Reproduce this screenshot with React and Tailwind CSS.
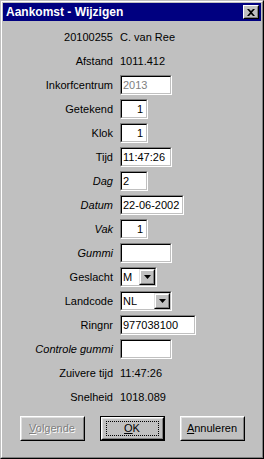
const FONT = { fontFamily: '"Liberation Sans", Arial, sans-serif' };

function Field({ value = "", width, align = "left", disabled }) {
  return (
    <div
      className="h-[20px] border border-t-[#808080] border-l-[#808080] border-b-white border-r-white"
      style={{ width }}
    >
      <div
        className={`flex h-full items-center overflow-hidden whitespace-nowrap border border-t-black border-l-black border-b-[#c0c0c0] border-r-[#c0c0c0] bg-white px-[1px] ${
          align === "right" ? "justify-end pr-[3px]" : "justify-start"
        } ${disabled ? "text-[#808080]" : "text-black"}`}
      >
        {value}
      </div>
    </div>
  );
}

function Combo({ value, width }) {
  return (
    <div
      className="h-[20px] border border-t-[#808080] border-l-[#808080] border-b-white border-r-white"
      style={{ width }}
    >
      <div className="flex h-full border border-t-black border-l-black border-b-[#c0c0c0] border-r-[#c0c0c0] bg-white">
        <div className="flex flex-1 items-center px-[1px]">{value}</div>
        <div className="w-[16px] border border-t-[#dfdfdf] border-l-[#dfdfdf] border-b-black border-r-black bg-[#c0c0c0]">
          <div className="flex h-full items-center justify-center border border-t-white border-l-white border-b-[#808080] border-r-[#808080]">
            <svg width="7" height="4" viewBox="0 0 7 4">
              <path d="M0 0h7L3.5 4z" fill="#000" />
            </svg>
          </div>
        </div>
      </div>
    </div>
  );
}

function Row({ label, italic, children }) {
  return (
    <div className="flex h-[24px] items-center whitespace-nowrap">
      <div
        className={`w-[111px] pr-[1px] text-right ${italic ? "italic" : ""}`}
      >
        {label}
      </div>
      <div className="ml-[6px] flex items-center">{children}</div>
    </div>
  );
}

function Button({ children, isDefault, disabled }) {
  return (
    <div
      className={`h-[25px] w-[65px] ${isDefault ? "border border-black" : ""}`}
    >
      <div className="h-full border border-t-white border-l-white border-b-black border-r-black">
        <div className="flex h-full items-center justify-center border border-t-[#dfdfdf] border-l-[#dfdfdf] border-b-[#808080] border-r-[#808080]">
          {isDefault ? (
            <div className="flex h-[15px] w-[53px] items-center justify-center border border-dotted border-black">
              {children}
            </div>
          ) : (
            <span
              className={disabled ? "text-[#808080]" : "text-black"}
              style={disabled ? { textShadow: "1px 1px 0 #fff" } : undefined}
            >
              {children}
            </span>
          )}
        </div>
      </div>
    </div>
  );
}

export default function App() {
  return (
    <div
      className="h-[459px] w-[264px] border border-t-[#c0c0c0] border-l-[#c0c0c0] border-b-black border-r-black bg-[#c0c0c0] text-[11px] text-black"
      style={FONT}
    >
      <div className="flex h-full flex-col border border-t-white border-l-white border-b-[#808080] border-r-[#808080] p-[1px]">
        <div className="flex h-[18px] items-center justify-between bg-[#000080] pl-[3px] pr-[2px]">
          <span className="text-[12px] font-bold text-white">
            Aankomst - Wijzigen
          </span>
          <div className="h-[14px] w-[16px] border border-t-white border-l-white border-b-black border-r-black bg-[#c0c0c0]">
            <div className="flex h-full items-center justify-center border border-t-[#c0c0c0] border-l-[#c0c0c0] border-b-[#808080] border-r-[#808080]">
              <svg width="8" height="7" viewBox="0 0 8 7">
                <path
                  d="M0 0h2l2 2 2-2h2L5 3.5 8 7H6L4 5 2 7H0l3-3.5z"
                  fill="#000"
                />
              </svg>
            </div>
          </div>
        </div>

        <div className="pt-[4px]">
          <Row label="20100255">C. van Ree</Row>
          <Row label="Afstand">1011.412</Row>
          <Row label="Inkorfcentrum">
            <Field value="2013" width={52} disabled />
          </Row>
          <Row label="Getekend">
            <Field value="1" width={28} align="right" />
          </Row>
          <Row label="Klok">
            <Field value="1" width={28} align="right" />
          </Row>
          <Row label="Tijd">
            <Field value="11:47:26" width={52} />
          </Row>
          <Row label="Dag" italic>
            <Field value="2" width={28} />
          </Row>
          <Row label="Datum" italic>
            <Field value="22-06-2002" width={64} />
          </Row>
          <Row label="Vak" italic>
            <Field value="1" width={28} align="right" />
          </Row>
          <Row label="Gummi" italic>
            <Field width={52} />
          </Row>
          <Row label="Geslacht">
            <Combo value="M" width={37} />
          </Row>
          <Row label="Landcode">
            <Combo value="NL" width={52} />
          </Row>
          <Row label="Ringnr">
            <Field value="977038100" width={76} />
          </Row>
          <Row label="Controle gummi" italic>
            <Field width={52} />
          </Row>
          <Row label="Zuivere tijd">11:47:26</Row>
          <Row label="Snelheid">1018.089</Row>
        </div>

        <div className="mt-[7px] flex justify-center gap-[15px]">
          <Button disabled>
            <u>V</u>olgende
          </Button>
          <Button isDefault>
            <u>O</u>K
          </Button>
          <Button>
            <u>A</u>nnuleren
          </Button>
        </div>
      </div>
    </div>
  );
}
